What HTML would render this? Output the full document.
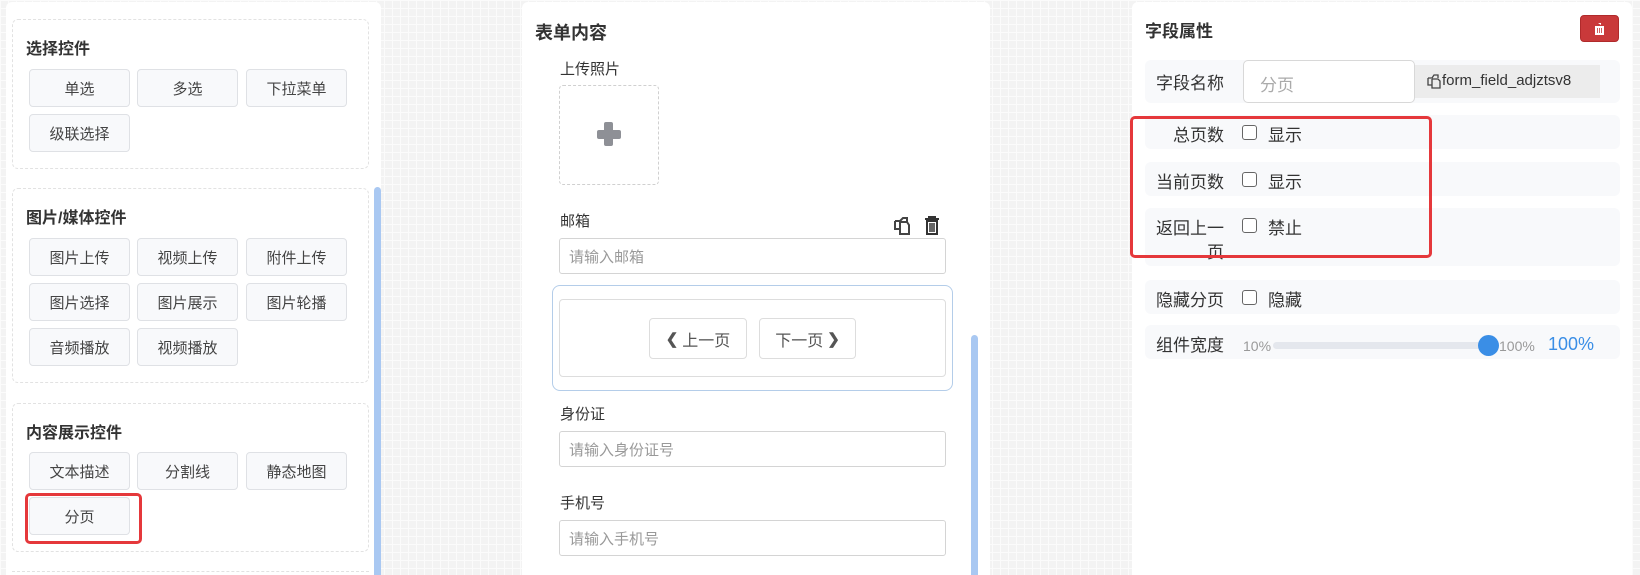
<!DOCTYPE html>
<html><head><meta charset="utf-8"><style>
*{box-sizing:border-box;margin:0;padding:0}
html,body{width:1640px;height:575px;overflow:hidden}
body{position:relative;font-family:"Liberation Sans","Noto Sans CJK SC",sans-serif;color:#333;
background-color:#f3f3f3;background-image:linear-gradient(#fbfbfb 1px,transparent 1px),linear-gradient(90deg,#fbfbfb 1px,transparent 1px);background-size:8px 8px}
.a{position:absolute}
.panel{background:#fff;border-radius:6px 6px 0 0}
.grp{position:absolute;border:1px dashed #e2e2e2;border-radius:6px;left:12px;width:357px}
.gt{position:absolute;left:13px;font-size:16px;font-weight:bold;color:#333}
.btn{position:absolute;width:101px;height:38px;background:#f8f9fb;border:1px solid #dfe1e5;border-radius:4px;font-size:15px;color:#444;display:flex;align-items:center;justify-content:center}
.lbl{position:absolute;left:560px;font-size:15px;color:#333}
.inp{position:absolute;left:559px;width:387px;height:36px;border:1px solid #d4d4d4;border-radius:3px;font-size:15px;color:#999;padding-left:9px;display:flex;align-items:center}
.row{position:absolute;left:1145px;width:475px;background:#f8f9fb;border-radius:6px}
.rl{position:absolute;right:calc(100% - 79px);font-size:17px;color:#333;white-space:nowrap}
.cb{position:absolute;left:97px;width:15px;height:15px;border:1.5px solid #666;border-radius:3px;background:#fff}
.ct{position:absolute;left:123px;font-size:17px;color:#333}
</style></head><body>

<div class="a panel" style="left:6px;top:2px;width:375px;height:573px"></div>
<div class="grp" style="top:19px;height:150px"><div class="gt" style="top:15px">选择控件</div></div>
<div class="btn" style="left:29px;top:69px">单选</div>
<div class="btn" style="left:137px;top:69px">多选</div>
<div class="btn" style="left:246px;top:69px">下拉菜单</div>
<div class="btn" style="left:29px;top:114px">级联选择</div>

<div class="grp" style="top:188px;height:195px"><div class="gt" style="top:15px">图片/媒体控件</div></div>
<div class="btn" style="left:29px;top:238px">图片上传</div>
<div class="btn" style="left:137px;top:238px">视频上传</div>
<div class="btn" style="left:246px;top:238px">附件上传</div>
<div class="btn" style="left:29px;top:283px">图片选择</div>
<div class="btn" style="left:137px;top:283px">图片展示</div>
<div class="btn" style="left:246px;top:283px">图片轮播</div>
<div class="btn" style="left:29px;top:328px">音频播放</div>
<div class="btn" style="left:137px;top:328px">视频播放</div>

<div class="grp" style="top:403px;height:149px"><div class="gt" style="top:15px">内容展示控件</div></div>
<div class="btn" style="left:29px;top:452px">文本描述</div>
<div class="btn" style="left:137px;top:452px">分割线</div>
<div class="btn" style="left:246px;top:452px">静态地图</div>
<div class="btn" style="left:29px;top:497px">分页</div>
<div class="a" style="left:25px;top:493px;width:117px;height:51px;border:3px solid #e5383b;border-radius:5px"></div>
<div class="a" style="left:12px;top:571px;width:357px;height:4px;border-top:1px dashed #e2e2e2"></div>
<div class="a" style="left:374px;top:187px;width:7px;height:388px;background:#a9c8f2;border-radius:4px 4px 0 0"></div>

<div class="a panel" style="left:522px;top:2px;width:468px;height:573px"></div>
<div class="a" style="left:535px;top:19px;font-size:18px;font-weight:bold;color:#333">表单内容</div>
<div class="lbl" style="top:58px">上传照片</div>
<div class="a" style="left:559px;top:85px;width:100px;height:100px;border:1px dashed #d0d0d0;border-radius:4px"></div>
<div class="a" style="left:597px;top:130px;width:24px;height:9px;background:#8e9096;border-radius:2px"></div>
<div class="a" style="left:604px;top:122px;width:9px;height:24px;background:#8e9096;border-radius:2px"></div>

<div class="lbl" style="top:210px">邮箱</div>
<svg class="a" style="left:893px;top:215px" width="22" height="20" viewBox="0 0 22 20"><path d="M2 6h5l3-3h4v4M2 6v8h5M7 7v12h9V10l-2-3H7" fill="none" stroke="#444" stroke-width="2"/></svg>
<svg class="a" style="left:924px;top:216px" width="16" height="19" viewBox="0 0 16 19"><path d="M1 3h14M5 3V1h6v2M3 5h10v13H3z" fill="none" stroke="#333" stroke-width="2"/><path d="M6 7v9M8 7v9M10 7v9" stroke="#333" stroke-width="1.5"/></svg>
<div class="inp" style="top:238px">请输入邮箱</div>

<div class="a" style="left:552px;top:285px;width:401px;height:106px;border:1.5px solid #b4cde9;border-radius:8px"></div>
<div class="a" style="left:559px;top:299px;width:387px;height:78px;border:1px solid #ddd;border-radius:4px"></div>
<div class="a" style="left:649px;top:318px;width:98px;height:41px;border:1px solid #ddd;border-radius:4px;font-size:16px;color:#555;display:flex;align-items:center;justify-content:center"><b style="font-size:15px;margin-right:4px">&#10094;</b>上一页</div>
<div class="a" style="left:759px;top:318px;width:97px;height:41px;border:1px solid #ddd;border-radius:4px;font-size:16px;color:#555;display:flex;align-items:center;justify-content:center">下一页<b style="font-size:15px;margin-left:4px">&#10095;</b></div>

<div class="lbl" style="top:403px">身份证</div>
<div class="inp" style="top:431px">请输入身份证号</div>
<div class="lbl" style="top:492px">手机号</div>
<div class="inp" style="top:520px">请输入手机号</div>
<div class="a" style="left:971px;top:335px;width:7px;height:240px;background:#a9c8f2;border-radius:4px 4px 0 0"></div>

<div class="a panel" style="left:1132px;top:2px;width:500px;height:573px"></div>
<div class="a" style="left:1145px;top:17px;font-size:17px;font-weight:bold;color:#333">字段属性</div>
<div class="a" style="left:1580px;top:15px;width:39px;height:27px;background:#c9393a;border:1px solid #b02a2b;border-radius:4px;display:flex;align-items:center;justify-content:center">
<svg width="11" height="12" viewBox="0 0 11 12"><path d="M0 2h11M4 0h3v2M1 3h9v9H1z" fill="#fff"/><path d="M3.5 5v5M5.5 5v5M7.5 5v5" stroke="#c9393a" stroke-width="0.8"/></svg></div>

<div class="row" style="top:60px;height:43px"><div class="rl" style="top:9px">字段名称</div></div>
<div class="a" style="left:1243px;top:60px;width:172px;height:43px;border:1px solid #d8d8d8;border-radius:5px;background:#fff;font-size:17px;color:#aaa;padding:10px 0 0 16px">分页</div>
<div class="a" style="left:1415px;top:65px;width:185px;height:33px;background:#ececec;font-size:15px;color:#333;padding:7px 0 0 12px;display:flex"><svg width="15" height="16" viewBox="0 0 15 16" style="margin-top:1px"><path d="M1 5h4l2-3h4v3M1 5v7h4M5 6v9h8V8l-2-2H5" fill="none" stroke="#444" stroke-width="1.3"/></svg>form_field_adjztsv8</div>

<div class="row" style="top:115px;height:34px"><div class="rl" style="top:6px">总页数</div><div class="cb" style="top:10px"></div><div class="ct" style="top:6px">显示</div></div>
<div class="row" style="top:162px;height:34px"><div class="rl" style="top:6px">当前页数</div><div class="cb" style="top:10px"></div><div class="ct" style="top:6px">显示</div></div>
<div class="row" style="top:208px;height:58px"><div class="rl" style="top:6px">返回上一</div><div class="rl" style="top:30px">页</div><div class="cb" style="top:10px"></div><div class="ct" style="top:6px">禁止</div></div>
<div class="row" style="top:280px;height:34px"><div class="rl" style="top:6px">隐藏分页</div><div class="cb" style="top:10px"></div><div class="ct" style="top:6px">隐藏</div></div>
<div class="row" style="top:325px;height:34px"><div class="rl" style="top:6px">组件宽度</div></div>
<div class="a" style="left:1243px;top:338px;font-size:14px;color:#999">10%</div>
<div class="a" style="left:1273px;top:342px;width:217px;height:7px;background:#e4e7ed;border-radius:4px"></div>
<div class="a" style="left:1478px;top:335px;width:21px;height:21px;background:#3a8ee6;border-radius:50%"></div>
<div class="a" style="left:1499px;top:338px;font-size:14px;color:#999">100%</div>
<div class="a" style="left:1548px;top:334px;font-size:18px;color:#3a8ee6">100%</div>

<div class="a" style="left:1130px;top:116px;width:302px;height:142px;border:3px solid #e5383b;border-radius:5px"></div>
</body></html>
